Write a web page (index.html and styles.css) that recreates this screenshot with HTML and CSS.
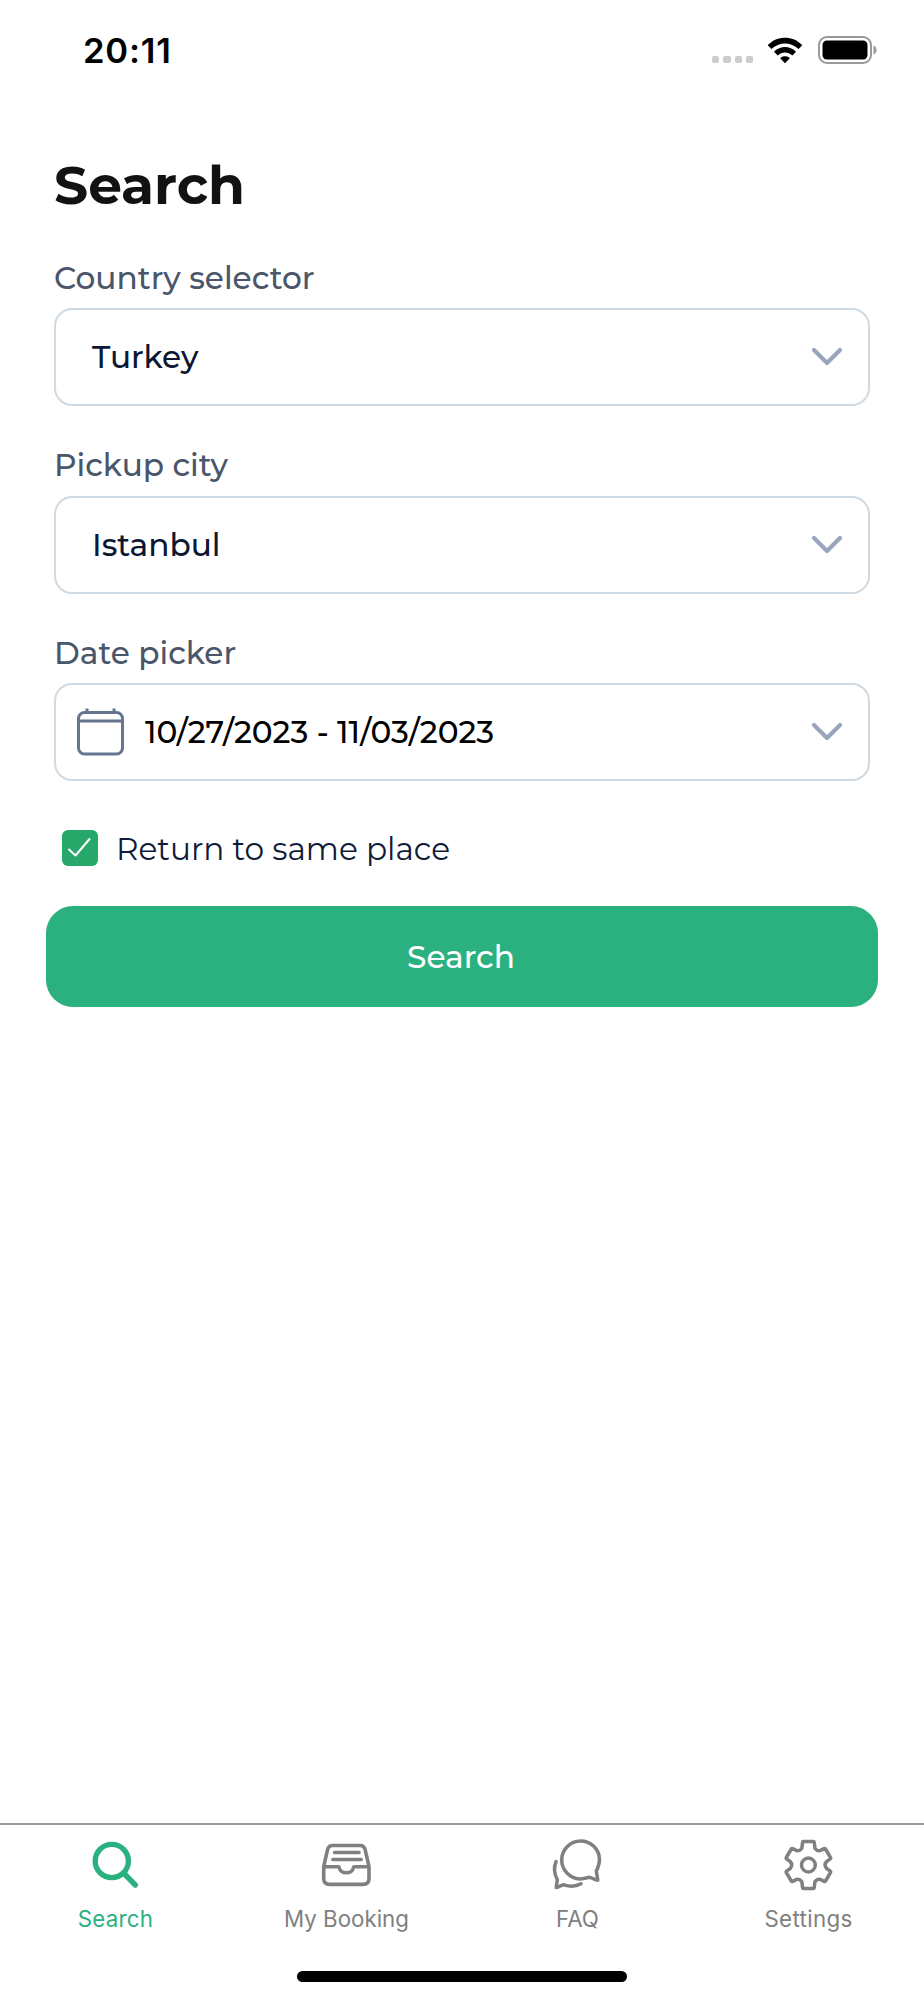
FILE: index.html
```html
<!DOCTYPE html>
<html lang="en">
<head>
<meta charset="utf-8">
<title>Search</title>
<link rel="stylesheet" href="styles.css">
</head>
<body>
<div class="screen">
  <header class="status">
    <span class="time">20:11</span>
    <span class="signal"><i></i><i></i><i></i><i></i></span>
    <svg class="wifi" width="36" height="28" viewBox="0 0 36 28">
      <path d="M.7 8.2C10.4-1.6 25.6-1.6 35.3 8.2l-3.7 3.9C24 4.5 12 4.500 4.400 12.100z"/>
      <path d="M7 14.700c6.200-6.200 15.800-6.200 22 0l-3.700 3.800c-4.200-4-10.400-4-14.600 0z"/>
      <path d="M13.200 21.200c2.700-2.600 6.900-2.600 9.600 0L18 26.300z"/>
    </svg>
    <svg class="battery" width="60" height="28" viewBox="0 0 60 28">
      <rect x="1" y="1" width="52" height="26" rx="8" fill="none" stroke="#999" stroke-width="2"/>
      <rect x="4.500" y="4.500" width="45" height="19" rx="4.500"/>
      <path d="M55.500 9.500c4 1.500 4 7.500 0 9z" fill="#999"/>
    </svg>
  </header>

  <main class="content">
    <h1 class="title">Search</h1>

    <div class="field">
      <div class="label">Country selector</div>
      <div class="select"><span class="value">Turkey</span>
        <svg class="chevron" width="32" height="20" viewBox="0 0 32 20"><path d="M3 3l13 13L29 3"/></svg></div>
    </div>
    <div class="field">
      <div class="label">Pickup city</div>
      <div class="select"><span class="value">Istanbul</span>
        <svg class="chevron" width="32" height="20" viewBox="0 0 32 20"><path d="M3 3l13 13L29 3"/></svg></div>
    </div>
    <div class="field">
      <div class="label">Date picker</div>
      <div class="select with-icon">
        <svg class="calendar" width="48" height="48" viewBox="0 0 48 48"><rect x="1.500" y="4.500" width="44" height="41.500" rx="6"/><path d="M1.500 13H45.500M10 .500v4M37 .500v4"/></svg>
        <span class="value v-date">10/27/2023 - 11/03/2023</span>
        <svg class="chevron" width="32" height="20" viewBox="0 0 32 20"><path d="M3 3l13 13L29 3"/></svg></div>
    </div>

    <div class="check-row">
      <span class="checkbox"><svg width="36" height="36" viewBox="0 0 36 36"><path d="M7 19.500l6.500 6L27.500 9"/></svg></span>
      <span class="check-text">Return to same place</span>
    </div>
  </main>
  <button class="submit">Search</button>

  <nav class="tabs">
    <div class="tab active">
      <svg width="56" height="56" viewBox="0 0 56 56" stroke-width="5.400"><circle cx="23.800" cy="25" r="16.600"/><path d="M36 37.500l11.300 11.500"/></svg>
      <span class="t-search">Search</span>
    </div>
    <div class="tab">
      <svg width="56" height="56" viewBox="0 0 56 56" stroke-width="3.600"><path d="M4.700 30.700H19Q20.300 30.700 20.400 32a7 5.400 0 0 0 13.900 0Q34.400 30.700 35.700 30.700H50V42.500Q50 48.400 44 48.400H10.700Q4.700 48.400 4.700 42.500zL8.500 13.800Q9.500 9.500 13.500 9.500H41.200Q45.200 9.500 46.200 13.800L50 30.700M15.500 16.500H40M13.800 23.500H42.200"/></svg>
      <span class="t-booking">My Booking</span>
    </div>
    <div class="tab">
      <svg width="56" height="56" viewBox="0 0 56 56" stroke-width="3.500"><path d="M39 41.300C34.500 42.500 32.500 43 30 42.900A18.900 19 0 1 1 49.500 23.500C49.500 28.500 48 31.500 46.300 35.200L47.800 44.300C44.500 44.200 42 41.300 39 41.300zM6.100 25.500C3.100 32.500 4.300 38 7.300 43.700L6.200 51.600C9.500 51.500 11 48.500 14 48.800C20.500 51 26.500 50.200 31 47.800"/></svg>
      <span class="t-faq">FAQ</span>
    </div>
    <div class="tab">
      <svg width="56" height="56" viewBox="0.400 0 56 56" stroke-width="3.500"><circle cx="27.800" cy="29" r="6.900"/><path d="M22.800 5.400H32.800Q33.500 5.400 33.600 6.200L34.400 12.500Q36.500 15.200 39.500 14.600L43.500 12.600Q44.400 12.200 44.900 13L50 21.600Q50.400 22.300 49.700 22.900L46 25.500Q43 29 46 32.500L49.700 35.100Q50.400 35.700 50 36.400L44.900 45Q44.400 45.800 43.500 45.400L39.500 43.400Q36.500 42.800 34.400 45.500L33.600 51.800Q33.500 52.600 32.800 52.600H22.800Q22.100 52.600 22 51.800L21.200 45.500Q19.100 42.800 16.100 43.400L12.100 45.400Q11.200 45.800 10.700 45L5.600 36.400Q5.200 35.700 5.900 35.100L9.600 32.500Q12.600 29 9.600 25.500L5.900 22.900Q5.200 22.300 5.600 21.600L10.700 13Q11.200 12.200 12.100 12.600L16.100 14.600Q19.100 15.200 21.200 12.500L22 6.200Q22.100 5.400 22.800 5.400z"/></svg>
      <span class="t-settings">Settings</span>
    </div>
  </nav>
  <div class="home"></div>
</div>
</body>
</html>
```
FILE: styles.css
```css
* { box-sizing: border-box; }
body { margin: 0; background: #fff; font-family: Montserrat, Inter, "Liberation Sans", sans-serif; }
.screen { width: 924px; height: 2000px; display: flex; flex-direction: column; overflow: hidden; background: #fff; }
.status { height: 100px; padding: 0 46px 0 83px; display: flex; align-items: center; flex: none; }
.time { margin-right: auto; font: 600 34.600px/40px Inter, sans-serif; letter-spacing: .8px; color: #000; }
.signal { display: flex; gap: 4px; margin: 19px 14px 0 0; }
.signal i { width: 7.200px; height: 7px; border-radius: 2px; background: #ccc; }
.wifi { margin: 1px 15px 0 0; }
.wifi, .battery { flex: none; }
.content { padding: 53.400px 54px 0; flex: none; }
.title { margin: 0 0 40.200px; font-size: 53.500px; line-height: 64px; font-weight: 700; color: #111214; }
.field { margin-bottom: 39.200px; }
.label { margin-bottom: 10.400px; font-size: 31.200px; line-height: 40px; font-weight: 500; color: #4a566a; white-space: nowrap; }
.select { height: 98px; padding: 0 25px 0 36px; display: flex; align-items: center; border: 2px solid #d0dae3; border-radius: 18px; }
.with-icon { padding-left: 21px; }
.value { flex: 1; font-size: 31.200px; line-height: 40px; font-weight: 500; color: #0b1733; white-space: nowrap; }
.chevron { fill: none; stroke: #98a5bd; stroke-width: 4.200; stroke-linecap: round; stroke-linejoin: round; }
.calendar { margin-right: 20px; fill: none; stroke: #66748e; stroke-width: 3; }
.value.v-date { color: #000; }
.check-row { display: flex; margin-top: 48.800px; padding-left: 8.400px; gap: 17.500px; height: 36px; }
.checkbox { width: 36px; height: 36px; border-radius: 6px; background: #27a76a; }
.checkbox svg { display: block; fill: none; stroke: #fff; stroke-width: 2; stroke-linecap: round; stroke-linejoin: round; }
.check-text { padding-top: 1.200px; font-size: 31.200px; line-height: 36px; font-weight: 400; color: #0f1b38; white-space: nowrap; }
.submit { flex: none; width: 832px; height: 101px; margin: 40px 46px 0; padding: 1px 2px 0 0; border: 0; border-radius: 27px; background: #2ab17f; color: #fff; font: 500 31.200px/40px Montserrat, Inter, sans-serif; }
.tabs { height: 148px; margin-top: auto; padding-top: 11px; display: grid; grid-template-columns: repeat(4, 1fr); border-top: 2px solid #999; flex: none; }
.tab { display: flex; flex-direction: column; align-items: center; color: #808080; font: 400 22.300px/30px Inter, sans-serif; }
.tab svg { fill: none; stroke: currentColor; stroke-linecap: round; stroke-linejoin: round; margin-bottom: 12px; }
.tab.active { color: #2ab17f; }
.t-search { letter-spacing: .25px; }
.t-settings { letter-spacing: .35px; }
.home { width: 330px; height: 11px; margin: 0 auto 18px; border-radius: 6px; background: #000; flex: none; }
```
